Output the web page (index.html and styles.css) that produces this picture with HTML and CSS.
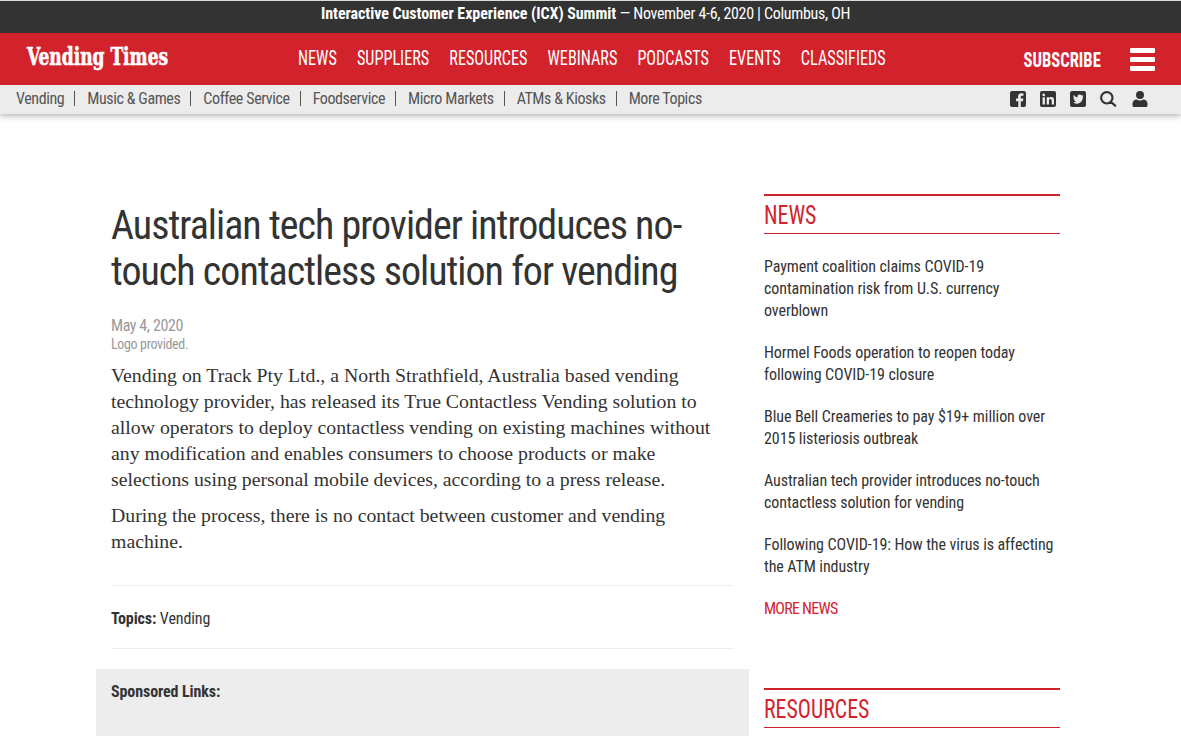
FILE: index.html
```html
<!DOCTYPE html>
<html lang="en">
<head>
<meta charset="utf-8">
<title>Australian tech provider introduces no-touch contactless solution for vending</title>
<link rel="stylesheet" href="styles.css">
</head>
<body>
<header class="masthead">
  <div class="promo"><b>Interactive Customer Experience (ICX) Summit</b> — November 4-6, 2020 | Columbus, OH</div>
  <div class="mainbar">
    <div class="logo-slot"><a class="logo">Vending Times</a></div>
    <nav class="mainnav">
      <a>NEWS</a><a>SUPPLIERS</a><a>RESOURCES</a><a>WEBINARS</a><a>PODCASTS</a><a>EVENTS</a><a>CLASSIFIEDS</a>
    </nav>
    <a class="subscribe">SUBSCRIBE</a>
    <div class="burger"><i></i><i></i><i></i></div>
  </div>
  <div class="subbar">
    <nav class="topics">
      <a>Vending</a><a>Music &amp; Games</a><a>Coffee Service</a><a>Foodservice</a><a>Micro Markets</a><a>ATMs &amp; Kiosks</a><a>More Topics</a>
    </nav>
    <div class="icons">
      <svg class="ico" viewBox="0 0 16 16"><path d="M2 0h12a2 2 0 0 1 2 2v12a2 2 0 0 1-2 2h-3.2v-5.8h2.2l.4-2.6h-2.6V6c0-.8.3-1.3 1.400-1.300h1.300V2.400c-.5-.1-1.200-.2-2-.2-2.100 0-3.400 1.200-3.400 3.400v2H6v2.600h2.300V16H2a2 2 0 0 1-2-2V2a2 2 0 0 1 2-2z"/></svg>
      <svg class="ico" viewBox="0 0 16 16"><path fill-rule="evenodd" d="M2 0h12a2 2 0 0 1 2 2v12a2 2 0 0 1-2 2H2a2 2 0 0 1-2-2V2a2 2 0 0 1 2-2zm.6 6.200v7.200h2.300V6.200zM3.750 2.600a1.300 1.300 0 1 0 0 2.600 1.300 1.300 0 0 0 0-2.600zM6.700 6.200v7.200H9V9.800c0-1 .2-1.900 1.400-1.900s1.300 1.100 1.300 2v3.500H14V9.400c0-2-.4-3.400-2.700-3.400-1.100 0-1.900.6-2.200 1.200V6.200z"/></svg>
      <svg class="ico" viewBox="0 0 16 16"><path fill-rule="evenodd" d="M2 0h12a2 2 0 0 1 2 2v12a2 2 0 0 1-2 2H2a2 2 0 0 1-2-2V2a2 2 0 0 1 2-2zm11 4.700c-.4.200-.9.300-1.300.4.500-.3.800-.7 1-1.300-.4.300-.9.400-1.400.5a2.300 2.300 0 0 0-3.900 2.100C6.500 6.300 4.800 5.400 3.700 4c-.6 1-.3 2.300.7 3-.4 0-.7-.1-1-.3 0 1.100.8 2.100 1.800 2.300-.3.100-.7.100-1 0 .3.900 1.100 1.600 2.100 1.600-1 .8-2.200 1.100-3.400 1 3.700 2.300 9.900.9 9.900-5.700 0-.2 0-.3 0-.4.500-.3.900-.7 1.200-.8z"/></svg>
      <svg class="ico ico-search" viewBox="0 0 17 16"><path fill="none" stroke="currentColor" stroke-width="2.200" d="M6.800 1.100a5.700 5.700 0 1 0 0 11.400 5.700 5.700 0 0 0 0-11.400zM10.900 10.900l5 4.400"/></svg>
      <svg class="ico" viewBox="0 0 16 16"><path d="M8 0a4 4 0 1 1 0 8 4 4 0 0 1 0-8zM4.600 8.600c1 .6 2.100.9 3.400.9s2.400-.3 3.400-.9C13.800 8.600 15.500 10.400 15.500 12.800v1.700c0 .8-.7 1.500-1.500 1.500H2c-.8 0-1.500-.7-1.500-1.500v-1.700c0-2.400 1.700-4.200 4.100-4.200z"/></svg>
    </div>
  </div>
</header>
<div class="page">
  <main class="article">
    <h1>Australian tech provider introduces no-touch contactless solution for vending</h1>
    <div class="date">May 4, 2020</div>
    <div class="caption">Logo provided.</div>
    <p>Vending on Track Pty Ltd., a North Strathfield, Australia based vending technology provider, has released its True Contactless Vending solution to allow operators to deploy contactless vending on existing machines without any modification and enables consumers to choose products or make selections using personal mobile devices, according to a press release.</p>
    <p>During the process, there is no contact between customer and vending machine.</p>
    <div class="tags"><b>Topics:</b> Vending</div>
    <div class="sponsored"><b>Sponsored Links:</b></div>
  </main>
  <aside class="sidebar">
    <section class="widget">
      <h2><span>NEWS</span></h2>
      <a class="story">Payment coalition claims COVID-19 contamination risk from U.S. currency overblown</a>
      <a class="story">Hormel Foods operation to reopen today following COVID-19 closure</a>
      <a class="story">Blue Bell Creameries to pay $19+ million over 2015 listeriosis outbreak</a>
      <a class="story">Australian tech provider introduces no-touch contactless solution for vending</a>
      <a class="story">Following COVID-19: How the virus is affecting the ATM industry</a>
      <a class="more">MORE NEWS</a>
    </section>
    <section class="widget">
      <h2><span>RESOURCES</span></h2>
    </section>
  </aside>
</div>
</body>
</html>
```
FILE: styles.css
```css
* { box-sizing: border-box; }
html, body { margin: 0; padding: 0; height: 736px; overflow: hidden; }
body {
  font-family: "Liberation Sans Narrow", "Roboto Condensed", Roboto, sans-serif;
  color: #333;
  background: #fff;
}
.masthead { box-shadow: 0 2px 6px rgba(0,0,0,.3); }
.promo {
  height: 33px;
  padding-right: 10px;
  border-top: 1px solid #ddd;
  background: #333;
  color: #fff;
  text-align: center;
  font-size: 16px;
  line-height: 26px;
  letter-spacing: -.32px;
}
.promo b { letter-spacing: -.05px; }
.mainbar {
  height: 52px;
  background: #d2232d;
  color: #fff;
  display: flex;
  align-items: center;
  padding: 0 26px 0 27px;
}
.logo-slot { width: 271px; flex: none; margin-top: -5px; }
.logo {
  display: inline-block;
  font-family: "DejaVu Serif Condensed", "DejaVu Serif", serif;
  font-weight: 700;
  font-size: 24px;
  white-space: nowrap;
  -webkit-text-stroke: .6px #fff;
  transform: scaleX(.79);
  transform-origin: left center;
}
.mainnav {
  display: flex;
  gap: 24.8px;
  font-size: 20px;
  flex: 1;
  min-width: 0;
  margin-top: -2px;
  transform: scaleX(.81);
  transform-origin: left center;
}
.subscribe {
  font-weight: 700;
  font-size: 21px;
  margin-right: 29px;
  margin-top: 2px;
  transform: scaleX(.79);
  transform-origin: right center;
}
.burger { width: 25px; display: flex; flex-direction: column; gap: 4px; }
.burger i { display: block; height: 5px; background: #fff; border-radius: 1px; }
.subbar {
  height: 29px;
  padding: 0 33px 2px 16px;
  background: #ececec;
  display: flex;
  align-items: center;
  justify-content: space-between;
}
.topics { display: flex; font-size: 16px; letter-spacing: -.4px; color: #555; }
.topics a { padding: 0 10px 0 12px; border-left: 1px solid #555; line-height: 15px; }
.topics a:first-child { padding-left: 0; border-left: 0; }
.icons { display: flex; gap: 14px; color: #333; }
.ico { width: 16px; height: 16px; fill: currentColor; display: block; }
.ico-search { width: 17px; margin-right: 1px; }
.page {
  display: flex;
  padding: 80px 0 0 96px;
}
.article { width: 653px; padding: 0 15px; flex: none; }
h1 {
  font-weight: 450;
  font-size: 40px;
  line-height: 46px;
  letter-spacing: -1px;
  margin: 9px 0 21px;
  color: #333;
}
.date { font-size: 16px; letter-spacing: -.4px; color: #999; line-height: 19px; }
.caption { font-size: 14px; letter-spacing: -.35px; color: #999; line-height: 19px; margin-bottom: 8px; }
.article p {
  font-family: "Liberation Serif", serif;
  font-size: 19.8px;
  line-height: 26px;
  max-width: 610px;
  margin: 0 0 10px;
  color: #333;
}
.tags {
  margin-top: 31px;
  padding: 22px 0 18px;
  border-top: 1px solid #eee;
  border-bottom: 1px solid #eee;
  font-size: 16px;
  letter-spacing: -.1px;
  line-height: 22px;
}
.sponsored {
  margin: 20px -15px 0;
  padding: 12px 15px;
  height: 90px;
  background: #ededed;
  font-size: 16px;
  letter-spacing: -.1px;
  line-height: 22px;
}
.sidebar { width: 296px; margin-left: 15px; flex: none; }
.widget { border-top: 2px solid #d2232d; margin-bottom: 68px; }
.widget h2 {
  height: 38px;
  margin: 0 0 22px;
  font-weight: 400;
  font-size: 26px;
  line-height: 37px;
  color: #d2232d;
  border-bottom: 1px solid #d2232d;
}
.widget h2 span { display: block; padding-top: 1px; transform: scaleX(.84); transform-origin: left center; }
.story { display: block; font-size: 16px; letter-spacing: -.08px; line-height: 22px; margin-bottom: 20px; }
.more { display: block; font-size: 16px; letter-spacing: -.75px; line-height: 22px; color: #d2232d; }
```
